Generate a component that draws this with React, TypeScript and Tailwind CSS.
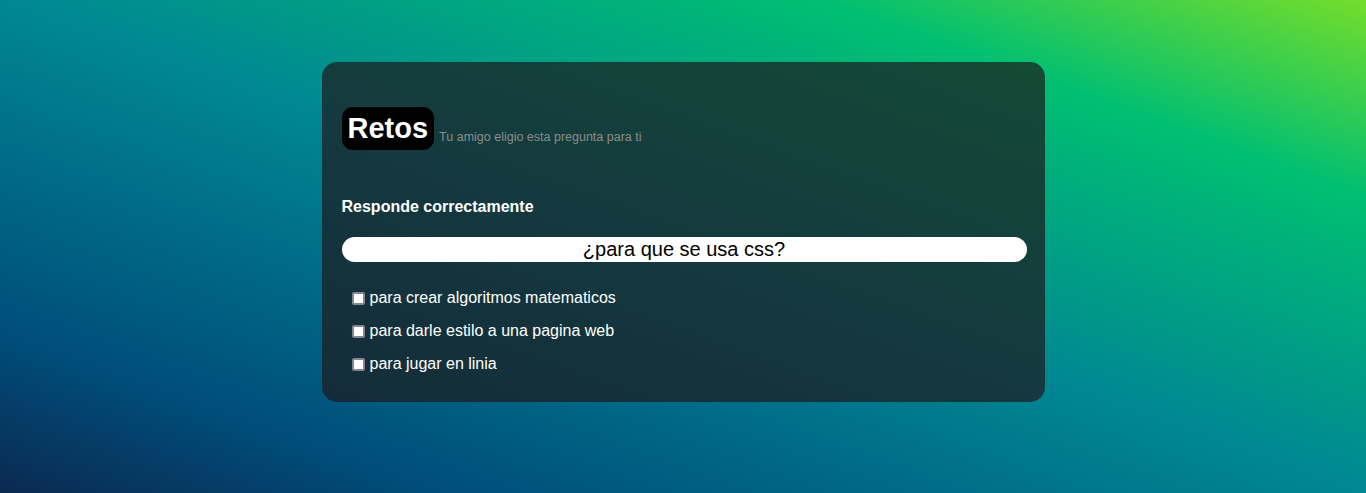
import React from "react";

const options = [
  "para crear algoritmos matematicos",
  "para darle estilo a una pagina web",
  "para jugar en linia",
];

export default function App() {
  return (
    <div className="min-h-screen w-full bg-[linear-gradient(to_right_top,#0b2950,#004d7a_16%,#008793_50%,#00bf72_80%,#74dd2a)] flex justify-center pt-[62px] font-['Liberation_Sans',Arial,sans-serif]">
      <div className="w-[723px] h-[340px] rounded-[15px] bg-[rgba(28,28,30,0.72)] pl-[20px] pr-[18px] pt-[45px]">
        <div className="flex items-end">
          <span className="inline-block bg-black text-white font-bold text-[29px] leading-[42px] h-[43px] px-[6px] rounded-[11px]">
            Retos
          </span>
          <span className="ml-[5px] pb-[6px] text-[12.5px] leading-[14px] text-[#8c8c8c]">
            Tu amigo eligio esta pregunta para ti
          </span>
        </div>
        <div className="mt-[48px] text-white font-bold text-[16px] leading-[18px]">
          Responde correctamente
        </div>
        <div className="mt-[21px] h-[25px] bg-white rounded-[13px] text-black text-[20px] leading-[25px] text-center">
          ¿para que se usa css?
        </div>
        <div className="mt-[27px] flex flex-col gap-[15px] pl-[10px]">
          {options.map((o) => (
            <label key={o} className="flex items-center text-white text-[16px] leading-[18px]">
              <span className="w-[13px] h-[13px] border-2 border-[#858592] bg-white rounded-[2px] mr-[5px] shrink-0" />
              <span>{o}</span>
            </label>
          ))}
        </div>
      </div>
    </div>
  );
}
